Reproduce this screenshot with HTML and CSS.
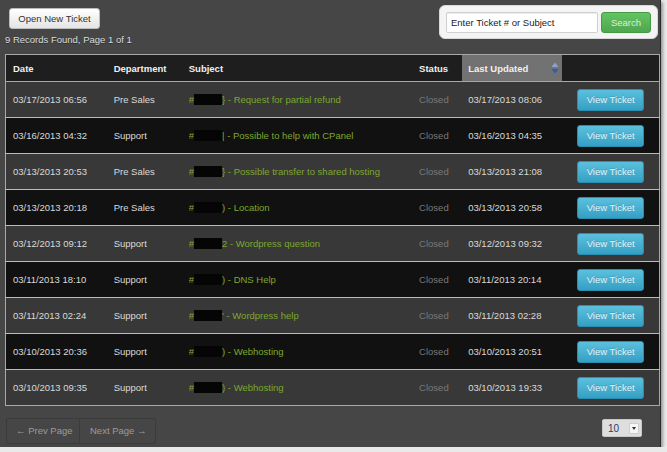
FILE: index.html
```html
<!DOCTYPE html>
<html>
<head>
<meta charset="utf-8">
<title>Support Tickets</title>
<link rel="stylesheet" href="styles.css">
</head>
<body>
<div class="screen">
  <div class="topbar">
    <div class="top-left">
      <button class="btn btn-light">Open New Ticket</button>
      <div class="records">9 Records Found, Page 1 of 1</div>
    </div>
    <form class="search-panel">
      <input class="search-input" type="text" value="Enter Ticket # or Subject">
      <button class="btn btn-green" type="button">Search</button>
    </form>
  </div>

  <table class="tickets">
    <colgroup>
      <col class="c-date"><col class="c-dept"><col class="c-subj"><col class="c-status"><col class="c-upd"><col class="c-act">
    </colgroup>
    <thead>
      <tr>
        <th>Date</th>
        <th>Department</th>
        <th>Subject</th>
        <th>Status</th>
        <th class="sorted">Last Updated
          <svg class="sort-icon" width="8" height="13" viewBox="0 0 8 13"><path d="M4 0.5 L7.5 5 L0.5 5 Z" fill="#8da2c4"/><path d="M0.5 7 L7.5 7 L4 11.5 Z" fill="#2b5cb3"/></svg>
        </th>
        <th></th>
      </tr>
    </thead>
    <tbody>
      <tr class="odd"><td>03/17/2013 06:56</td><td>Pre Sales</td><td class="subj">#<span class="redact"></span>} - Request for partial refund</td><td class="status">Closed</td><td>03/17/2013 08:06</td><td class="act"><button class="btn btn-blue">View Ticket</button></td></tr>
      <tr class="even"><td>03/16/2013 04:32</td><td>Support</td><td class="subj">#<span class="redact"></span>| - Possible to help with CPanel</td><td class="status">Closed</td><td>03/16/2013 04:35</td><td class="act"><button class="btn btn-blue">View Ticket</button></td></tr>
      <tr class="odd"><td>03/13/2013 20:53</td><td>Pre Sales</td><td class="subj">#<span class="redact"></span>} - Possible transfer to shared hosting</td><td class="status">Closed</td><td>03/13/2013 21:08</td><td class="act"><button class="btn btn-blue">View Ticket</button></td></tr>
      <tr class="even"><td>03/13/2013 20:18</td><td>Pre Sales</td><td class="subj">#<span class="redact"></span>) - Location</td><td class="status">Closed</td><td>03/13/2013 20:58</td><td class="act"><button class="btn btn-blue">View Ticket</button></td></tr>
      <tr class="odd"><td>03/12/2013 09:12</td><td>Support</td><td class="subj">#<span class="redact"></span>2 - Wordpress question</td><td class="status">Closed</td><td>03/12/2013 09:32</td><td class="act"><button class="btn btn-blue">View Ticket</button></td></tr>
      <tr class="even"><td>03/11/2013 18:10</td><td>Support</td><td class="subj">#<span class="redact"></span>) - DNS Help</td><td class="status">Closed</td><td>03/11/2013 20:14</td><td class="act"><button class="btn btn-blue">View Ticket</button></td></tr>
      <tr class="odd"><td>03/11/2013 02:24</td><td>Support</td><td class="subj">#<span class="redact"></span>' - Wordpress help</td><td class="status">Closed</td><td>03/11/2013 02:28</td><td class="act"><button class="btn btn-blue">View Ticket</button></td></tr>
      <tr class="even"><td>03/10/2013 20:36</td><td>Support</td><td class="subj">#<span class="redact"></span>) - Webhosting</td><td class="status">Closed</td><td>03/10/2013 20:51</td><td class="act"><button class="btn btn-blue">View Ticket</button></td></tr>
      <tr class="odd"><td>03/10/2013 09:35</td><td>Support</td><td class="subj">#<span class="redact"></span>) - Webhosting</td><td class="status">Closed</td><td>03/10/2013 19:33</td><td class="act"><button class="btn btn-blue">View Ticket</button></td></tr>
    </tbody>
  </table>

  <div class="footer">
    <div class="pager">
      <a class="pager-item prev">&larr; Prev Page</a>
      <a class="pager-item next">Next Page &rarr;</a>
    </div>
    <div class="per-page">
      <span class="per-page-value">10</span>
      <span class="per-page-arrow"><svg width="4" height="3" viewBox="0 0 4 3"><path d="M0 0 L4 0 L2 3 Z" fill="#333"/></svg></span>
    </div>
  </div>
</div>
</body>
</html>
```

FILE: styles.css
```css
html, body {
  margin: 0;
  padding: 0;
  background: #e9e9e9;
}

body {
  font-family: "Liberation Sans", Arial, sans-serif;
  font-size: 9.5px;
}

.screen {
  width: 661px;
  height: 447px;
  background: #464646;
  border-right: 1px solid #2a2a2a;
  box-shadow: 2px 2px 3px rgba(0, 0, 0, 0.35);
  box-sizing: border-box;
  padding: 5px 1px 0 5px;
  display: flex;
  flex-direction: column;
}

/* top bar */
.topbar {
  display: flex;
  justify-content: space-between;
  align-items: flex-start;
  height: 49px;
}

.top-left {
  display: flex;
  flex-direction: column;
  align-items: flex-start;
  padding-top: 3px;
}

.btn {
  font-family: inherit;
  font-size: 9.5px;
  cursor: pointer;
  border-radius: 3px;
  padding: 0;
}

.btn-light {
  margin-left: 4px;
  width: 91px;
  height: 21px;
  color: #333;
  background: linear-gradient(#ffffff, #e4e4e4);
  border: 1px solid #bdbdbd;
}

.records {
  margin-top: 5px;
  color: #dcdcdc;
  text-shadow: 0 1px 0 rgba(0, 0, 0, 0.4);
}

.search-panel {
  margin: 0 1px 0 0;
  width: 219px;
  height: 34px;
  box-sizing: border-box;
  background: #f4f4f4;
  border: 1px solid #d8d8d8;
  border-radius: 6px;
  display: flex;
  align-items: center;
  padding: 0 6px 0 6px;
  gap: 3px;
}

.search-input {
  width: 152px;
  height: 21px;
  box-sizing: border-box;
  border: 1px solid #d0d0d0;
  border-radius: 2px;
  background: #fff;
  font-family: inherit;
  font-size: 9.5px;
  color: #222;
  padding: 0 4px;
  box-shadow: inset 0 1px 1px rgba(0, 0, 0, 0.08);
}

.btn-green {
  width: 50px;
  height: 21px;
  color: #dcefd6;
  background: linear-gradient(#62c462, #4fa64f);
  border: 1px solid #449944;
}

/* ticket table */
.tickets {
  width: 655px;
  border-collapse: collapse;
  table-layout: fixed;
  border: 1px solid #a8a8a8;
}

.c-date { width: 101px; }
.c-dept { width: 75px; }
.c-subj { width: 230px; }
.c-status { width: 50px; }
.c-upd { width: 100px; }
.c-act { width: 97px; }

.tickets th {
  height: 26px;
  padding: 0 0 0 7px;
  text-align: left;
  font-weight: bold;
  color: #f0f0f0;
  background: #1e1e1e;
  border-bottom: 1px solid #a8a8a8;
  position: relative;
}

.tickets th.sorted {
  background: #727272;
  padding-left: 6px;
}

.sort-icon {
  position: absolute;
  right: 3px;
  top: 7px;
}

.tickets td {
  height: 35px;
  padding: 0 0 0 7px;
  color: #dadada;
  white-space: nowrap;
  overflow: hidden;
  border-top: 1px solid #bcbcbc;
}

.tickets td:nth-child(5) {
  padding-left: 6px;
}

.tickets tr.odd td { background: #383838; }
.tickets tr.even td { background: #111111; }

.tickets td.subj { color: #7da72f; }
.tickets td.status { color: #797979; }

.redact {
  display: inline-block;
  width: 28px;
  height: 11px;
  background: #050505;
  vertical-align: -2px;
}

.tickets td.act {
  text-align: center;
  padding: 0;
}

.btn-blue {
  width: 67px;
  height: 22px;
  color: #e4f4fa;
  background: linear-gradient(#5bc0de, #35a0c4);
  border: 1px solid #2b8db0;
  text-shadow: 0 -1px 0 rgba(0, 0, 0, 0.15);
}

/* footer: pager and page size */
.footer {
  display: flex;
  justify-content: space-between;
  align-items: flex-start;
  margin-top: 12px;
}

.pager {
  display: flex;
  margin-left: 1px;
  border: 1px solid #3b3b3b;
  border-radius: 2px;
}

.pager-item {
  height: 24px;
  line-height: 24px;
  box-sizing: border-box;
  padding: 0 0 0 9px;
  white-space: nowrap;
  color: #9c9c9c;
}

.pager-item.prev {
  width: 73px;
  border-right: 1px solid #3b3b3b;
}

.pager-item.next {
  width: 75px;
  padding-left: 10px;
}

.per-page {
  margin: 1px 17px 0 0;
  width: 40px;
  height: 18px;
  box-sizing: border-box;
  background: #dedede;
  border: 1px solid #c8c8c8;
  border-radius: 2px;
  display: flex;
  align-items: center;
  justify-content: space-between;
  padding: 0 2px 0 5px;
}

.per-page-value {
  color: #2b3a63;
  font-size: 10px;
}

.per-page-arrow {
  width: 10px;
  height: 11px;
  background: #f6f6f6;
  border: 1px solid #cfcfcf;
  box-sizing: border-box;
  display: flex;
  align-items: center;
  justify-content: center;
}
```
